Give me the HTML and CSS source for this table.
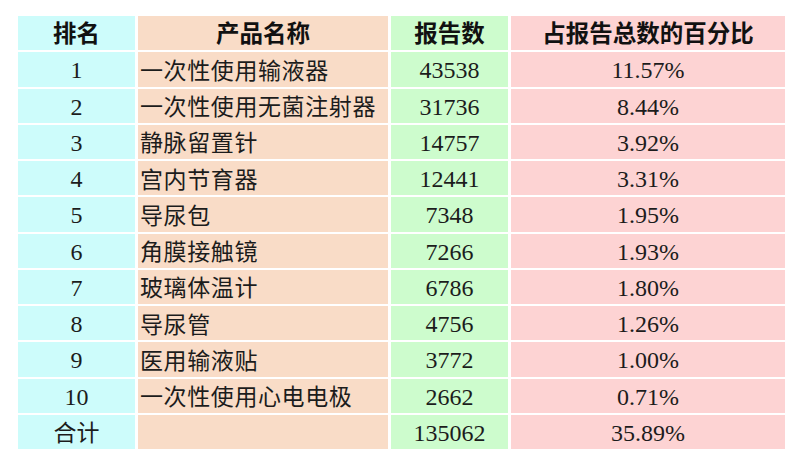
FILE: index.html
```html
<!DOCTYPE html>
<html lang="zh">
<head>
<meta charset="utf-8">
<link rel="stylesheet" href="styles.css">
</head>
<body>
<div class="table">
  <div class="c1 head">排名</div><div class="c2 head center">产品名称</div><div class="c3 head">报告数</div><div class="c4 head">占报告总数的百分比</div>
  <div class="c1 num">1</div><div class="c2">一次性使用输液器</div><div class="c3 num">43538</div><div class="c4 num">11.57%</div>
  <div class="c1 num">2</div><div class="c2">一次性使用无菌注射器</div><div class="c3 num">31736</div><div class="c4 num">8.44%</div>
  <div class="c1 num">3</div><div class="c2">静脉留置针</div><div class="c3 num">14757</div><div class="c4 num">3.92%</div>
  <div class="c1 num">4</div><div class="c2">宫内节育器</div><div class="c3 num">12441</div><div class="c4 num">3.31%</div>
  <div class="c1 num">5</div><div class="c2">导尿包</div><div class="c3 num">7348</div><div class="c4 num">1.95%</div>
  <div class="c1 num">6</div><div class="c2">角膜接触镜</div><div class="c3 num">7266</div><div class="c4 num">1.93%</div>
  <div class="c1 num">7</div><div class="c2">玻璃体温计</div><div class="c3 num">6786</div><div class="c4 num">1.80%</div>
  <div class="c1 num">8</div><div class="c2">导尿管</div><div class="c3 num">4756</div><div class="c4 num">1.26%</div>
  <div class="c1 num">9</div><div class="c2">医用输液贴</div><div class="c3 num">3772</div><div class="c4 num">1.00%</div>
  <div class="c1 num">10</div><div class="c2">一次性使用心电电极</div><div class="c3 num">2662</div><div class="c4 num">0.71%</div>
  <div class="c1">合计</div><div class="c2"></div><div class="c3 num">135062</div><div class="c4 num">35.89%</div>
</div>
</body>
</html>
```
FILE: styles.css
```css
html, body {
  margin: 0;
  padding: 0;
  background: #ffffff;
}
body {
  padding: 16px 0 0 18px;
  font-family: "Noto Sans CJK SC", sans-serif;
  color: #1c1c1c;
}
.table {
  display: grid;
  grid-template-columns: 117px 250px 117px 274px;
  grid-auto-rows: 34.25px;
  column-gap: 3px;
  row-gap: 2px;
  width: max-content;
}
.table > div {
  display: flex;
  align-items: center;
  justify-content: center;
  font-size: 23px;
  line-height: 1;
  white-space: nowrap;
}
.c1 { background: #cdfcfb; }
.c2 { background: #f9dcc7; justify-content: flex-start !important; padding-left: 2px; letter-spacing: 0.6px; }
.c3 { background: #cdfccd; }
.c4 { background: #fdd3d3; }
.table > .head {
  font-weight: 700;
  font-size: 23.5px;
  color: #111;
}
.table > .c2.center { justify-content: center !important; padding-left: 0; letter-spacing: 0; }
.table > .num {
  font-family: "Liberation Serif", "Times New Roman", serif;
  font-size: 24px;
  padding-top: 2px;
}
```
